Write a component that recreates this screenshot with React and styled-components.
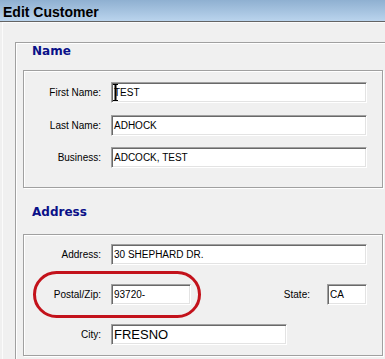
import styled, { createGlobalStyle } from "styled-components";

const Global = createGlobalStyle`
    html, body {
        margin: 0;
        padding: 0;
        background: #f0f0f0;
        overflow: hidden;
    }
    body {
        font-family: "Liberation Sans", Arial, sans-serif;
    }
`;

export default function App() {
    return (
        <Page>
            <Global />
            <TitleBar>Edit Customer</TitleBar>
            <Body>
                <Panel>
                    <Header $pad={1} $h={27}>Name</Header>
                    <GroupBox $top={11} $bottom={19} $gap={11.5}>
                        <Row>
                            <Label>First Name:</Label>
                            <Field $w={256}>
                                TEST
                                <Cursor width="5" height="17" viewBox="0 0 5 17">
                                    <path d="M0 0.5h5M0 16.5h5" stroke="#000" strokeWidth="1" />
                                    <rect x="1.5" y="0" width="2" height="17" fill="#000" />
                                </Cursor>
                            </Field>
                        </Row>
                        <Row>
                            <Label>Last Name:</Label>
                            <Field $w={256}>ADHOCK</Field>
                        </Row>
                        <Row>
                            <Label>Business:</Label>
                            <Field $w={256}>ADCOCK, TEST</Field>
                        </Row>
                    </GroupBox>
                    <Header $pad={17} $h={46}>Address</Header>
                    <GroupBox $top={9} $bottom={10} $gap={19}>
                        <Row>
                            <Label>Address:</Label>
                            <Field $w={256}>30 SHEPHARD DR.</Field>
                        </Row>
                        <Row>
                            <Label>Postal/Zip:</Label>
                            <Field $w={80}>93720-</Field>
                            <Spacer />
                            <Label $auto>State:</Label>
                            <Field $w={40} $gap={17}>CA</Field>
                        </Row>
                        <Row>
                            <Label>City:</Label>
                            <Field $w={176} $big>FRESNO</Field>
                        </Row>
                        <Highlight />
                    </GroupBox>
                </Panel>
            </Body>
        </Page>
    );
}

const Page = styled.div`
    width: 385px;
    height: 359px;
    overflow: hidden;
    background: #f0f0f0;
`;

const TitleBar = styled.div`
    box-sizing: border-box;
    height: 22px;
    padding: 3px 0 0 3px;
    line-height: 18px;
    font-size: 14px;
    font-weight: 700;
    color: #000;
    background: linear-gradient(to bottom, #8fb0d1, #bad4ed);
    border-bottom: 1px solid #646464;
`;

const Body = styled.div`
    margin-left: 2px;
    border-left: 1px solid #fbfbfb;
    border-top: 1px solid #fbfbfb;
    padding-top: 19px;
`;

const Panel = styled.div`
    margin-left: 12px;
    width: 372px;
    border: 1px solid #a0a0a0;
    border-right: none;
    box-shadow: inset 1px 1px 0 #fff;
    padding-bottom: 8px;
`;

const Header = styled.div`
    box-sizing: border-box;
    height: ${(p) => p.$h}px;
    padding: ${(p) => p.$pad}px 0 0 16px;
    font-family: "DejaVu Sans", Verdana, sans-serif;
    font-size: 12px;
    line-height: 14px;
    font-weight: 700;
    color: #0a1088;
`;

const GroupBox = styled.div`
    position: relative;
    box-sizing: border-box;
    width: 360px;
    margin-left: 7px;
    padding: ${(p) => p.$top}px 0 ${(p) => p.$bottom}px 0;
    display: flex;
    flex-direction: column;
    gap: ${(p) => p.$gap}px;
    border: 1px solid #a0a0a0;
    box-shadow: inset 1px 1px 0 #fff, 1px 1px 0 #fff;
`;

const Row = styled.div`
    display: flex;
    align-items: center;
    width: 343px;
`;

const Label = styled.div`
    width: ${(p) => (p.$auto ? "auto" : "77px")};
    text-align: right;
    font-size: 10px;
    color: #000;
    margin-right: 10px;
`;

const Spacer = styled.div`
    flex: 1;
`;

const Field = styled.div`
    position: relative;
    box-sizing: border-box;
    width: ${(p) => p.$w}px;
    height: 21px;
    margin-left: ${(p) => (p.$gap ? p.$gap - 10 : 0)}px;
    padding-left: 2px;
    line-height: 19px;
    font-size: ${(p) => (p.$big ? 13 : 10)}px;
    color: #000;
    background: #fff;
    border: 1px solid;
    border-color: #a0a0a0 #fff #fff #a0a0a0;
    box-shadow: inset 1px 1px 0 #696969, inset -1px -1px 0 #e3e3e3;
    white-space: nowrap;
`;

const Cursor = styled.svg`
    position: absolute;
    left: 1px;
    top: 1px;
`;

const Highlight = styled.div`
    position: absolute;
    left: 9px;
    top: 36px;
    width: 168px;
    height: 47px;
    box-sizing: border-box;
    border: 3px solid #c3121b;
    border-radius: 24px;
    pointer-events: none;
`;
